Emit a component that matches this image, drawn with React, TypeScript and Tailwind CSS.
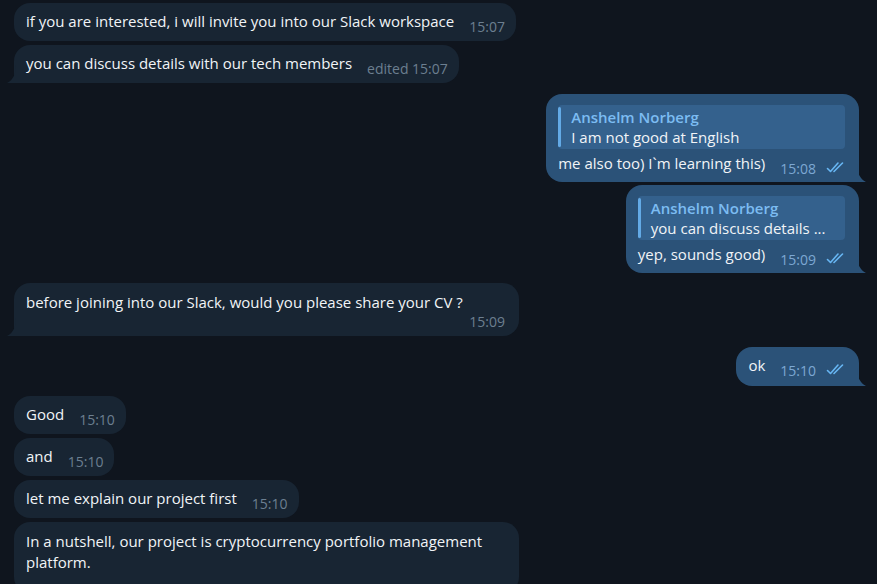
import React from "react";

const IN_BG = "#182533";
const OUT_BG = "#2b5278";

function Checks() {
  return (
    <svg width="20" height="12" viewBox="0 0 20 12" className="ml-[10px] relative top-[4px]">
      <path d="M1.5 7.5 L4.5 10.5 L12 2" fill="none" stroke="#67b6f3" strokeWidth="1.6" strokeLinecap="round" strokeLinejoin="round" />
      <path d="M8 10.5 L16.5 2" fill="none" stroke="#67b6f3" strokeWidth="1.6" strokeLinecap="round" />
    </svg>
  );
}

function Tail({ side, color }: { side: "in" | "out"; color: string }) {
  if (side === "in")
    return (
      <svg width="9" height="18" viewBox="0 0 9 18" className="absolute bottom-0 left-[-7px]">
        <path d="M9 0 C9 9 6 15 0 18 H9 Z" fill={color} />
      </svg>
    );
  return (
    <svg width="9" height="18" viewBox="0 0 9 18" className="absolute bottom-0 right-[-7px]">
      <path d="M0 0 C0 9 3 15 9 18 H0 Z" fill={color} />
    </svg>
  );
}

function Time({ t, out, edited }: { t: string; out?: boolean; edited?: boolean }) {
  return (
    <span
      className={
        "ml-[15px] text-[14px] relative top-[5px] whitespace-nowrap " +
        (out ? "text-[#7da8d3]" : "text-[#6c7f90]")
      }
    >
      {edited ? "edited " : ""}
      {t}
    </span>
  );
}

function In({ text, time, tail, edited }: { text: string; time: string; tail?: boolean; edited?: boolean }) {
  return (
    <div className="flex justify-start">
      <div
        className={
          "relative bg-[#182533] rounded-[16px] pl-[12px] pr-[11px] pt-[8px] pb-[9px] leading-[20px] flex items-baseline " +
          (tail ? "rounded-bl-none" : "")
        }
      >
        <span>{text}</span>
        <Time t={time} edited={edited} />
        {tail && <Tail side="in" color={IN_BG} />}
      </div>
    </div>
  );
}

function Reply({ name, text }: { name: string; text: string }) {
  return (
    <div className="flex bg-[#34618d] rounded-[4px] mr-[1px]">
      <div className="w-[3px] bg-[#63aae6] rounded-[2px] my-[2px]" />
      <div className="pl-[10px] pr-[12px] py-[2px] leading-[20px]">
        <div className="text-[#7cbcf2] font-semibold">{name}</div>
        <div>{text}</div>
      </div>
    </div>
  );
}

function OutReply({ name, quote, text, time }: { name: string; quote: string; text: string; time: string }) {
  return (
    <div className="flex justify-end">
      <div className="relative bg-[#2b5278] rounded-[16px] rounded-br-none pl-[12px] pr-[13px] pt-[11px] pb-[8px] flex flex-col">
        <Reply name={name} text={quote} />
        <div className="flex items-baseline leading-[20px] mt-[4px]">
          <span>{text}</span>
          <Time t={time} out />
          <Checks />
        </div>
        <Tail side="out" color={OUT_BG} />
      </div>
    </div>
  );
}

export default function App() {
  return (
    <div
      className="w-[877px] h-[584px] overflow-hidden bg-[#0f151e] text-[#f1f4f7] text-[15px] pl-[14px] pr-[18px] pt-[3px] flex flex-col"
      style={{ fontFamily: '"Open Sans", "Liberation Sans", sans-serif' }}
    >
      <div className="flex flex-col gap-[4px]">
        <In text="if you are interested, i will invite you into our Slack workspace" time="15:07" />
        <In text="you can discuss details with our tech members" time="15:07" edited tail />
      </div>

      <div className="flex flex-col gap-[3px] mt-[11px]">
        <OutReply name="Anshelm Norberg" quote="I am not good at English" text="me also too) I`m learning this)" time="15:08" />
        <OutReply name="Anshelm Norberg" quote="you can discuss details ..." text="yep, sounds good)" time="15:09" />
      </div>

      <div className="flex justify-start mt-[10px]">
        <div className="relative bg-[#182533] rounded-[16px] rounded-bl-none w-[505px] pl-[12px] pr-[14px] pt-[9px] pb-[5px] leading-[20px]">
          <div>before joining into our Slack, would you please share your CV ?</div>
          <div className="text-right text-[14px] text-[#6c7f90] leading-[18px] mt-[1px]">15:09</div>
          <Tail side="in" color={IN_BG} />
        </div>
      </div>

      <div className="flex justify-end mt-[11px]">
        <div className="relative bg-[#2b5278] rounded-[16px] rounded-br-none pl-[12px] pr-[13px] pt-[8px] pb-[10px] leading-[20px] flex items-baseline">
          <span>ok</span>
          <Time t="15:10" out />
          <Checks />
          <Tail side="out" color={OUT_BG} />
        </div>
      </div>

      <div className="flex flex-col gap-[4px] mt-[10px]">
        <In text="Good" time="15:10" />
        <In text="and" time="15:10" />
        <In text="let me explain our project first" time="15:10" />
        <div className="flex justify-start">
          <div className="bg-[#182533] rounded-[16px] w-[505px] pl-[12px] pr-[14px] pt-[9px] pb-[20px] leading-[21px]">
            In a nutshell, our project is cryptocurrency portfolio management
            <br />
            platform.
          </div>
        </div>
      </div>
    </div>
  );
}
